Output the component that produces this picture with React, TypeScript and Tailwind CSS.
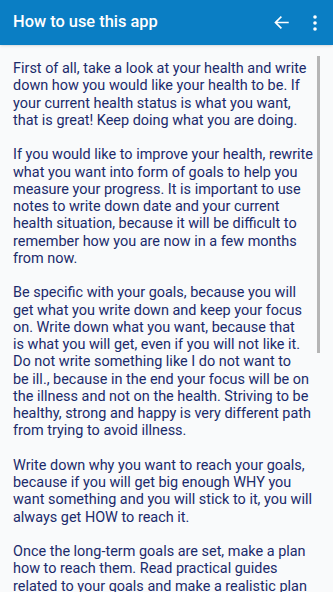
import React from 'react';

const paragraphs: string[][] = [
    [
        "First of all, take a look at your health and write",
        "down how you would like your health to be. If",
        "your current health status is what you want,",
        "that is great! Keep doing what you are doing.",
    ],
    [
        "If you would like to improve your health, rewrite",
        "what you want into form of goals to help you",
        "measure your progress. It is important to use",
        "notes to write down date and your current",
        "health situation, because it will be difficult to",
        "remember how you are now in a few months",
        "from now.",
    ],
    [
        "Be specific with your goals, because you will",
        "get what you write down and keep your focus",
        "on. Write down what you want, because that",
        "is what you will get, even if you will not like it.",
        "Do not write something like I do not want to",
        "be ill., because in the end your focus will be on",
        "the illness and not on the health. Striving to be",
        "healthy, strong and happy is very different path",
        "from trying to avoid illness.",
    ],
    [
        "Write down why you want to reach your goals,",
        "because if you will get big enough WHY you",
        "want something and you will stick to it, you will",
        "always get HOW to reach it.",
    ],
    [
        "Once the long-term goals are set, make a plan",
        "how to reach them. Read practical guides",
        "related to your goals and make a realistic plan",
    ],
];

export default function App() {
    return (
        <div className="w-[333px] h-[592px] overflow-hidden bg-[#f9fafb] flex flex-col font-['Roboto',sans-serif]">
            {/* Toolbar */}
            <div className="h-[45px] shrink-0 bg-[#0a7ec4] flex items-center pl-[13px] pr-[6px] shadow-sm">
                <h1 className="flex-1 text-white text-[16.4px] font-medium leading-none">How to use this app</h1>
                <button className="w-[30px] h-[30px] flex items-center justify-center text-white mr-[7px]">
                    <svg width="17" height="17" viewBox="0 0 24 24" fill="none" stroke="currentColor" strokeWidth="2.4" strokeLinecap="square">
                        <path d="M21 12H4M11 4.5L3.5 12L11 19.5" />
                    </svg>
                </button>
                <button className="w-[24px] h-[30px] flex items-center justify-center text-white">
                    <svg width="4" height="16" viewBox="0 0 4 16" fill="currentColor">
                        <circle cx="2" cy="2" r="1.8" />
                        <circle cx="2" cy="8" r="1.8" />
                        <circle cx="2" cy="14" r="1.8" />
                    </svg>
                </button>
            </div>

            {/* Content */}
            <div className="relative flex-1 overflow-hidden">
                <div className="pl-[13px] pt-[15px] text-[14.45px] leading-[17.25px] text-[#1b2b6b] flex flex-col gap-[17.25px]">
                    {paragraphs.map((lines, i) => (
                        <p key={i} className="whitespace-nowrap">
                            {lines.map((line, j) => (
                                <React.Fragment key={j}>
                                    {line}
                                    {j < lines.length - 1 && <br />}
                                </React.Fragment>
                            ))}
                        </p>
                    ))}
                </div>
                {/* Scrollbar thumb */}
                <div className="absolute right-[13px] top-[11px] w-[3px] h-[297px] bg-[#b5b5b5]"></div>
            </div>
        </div>
    );
}
